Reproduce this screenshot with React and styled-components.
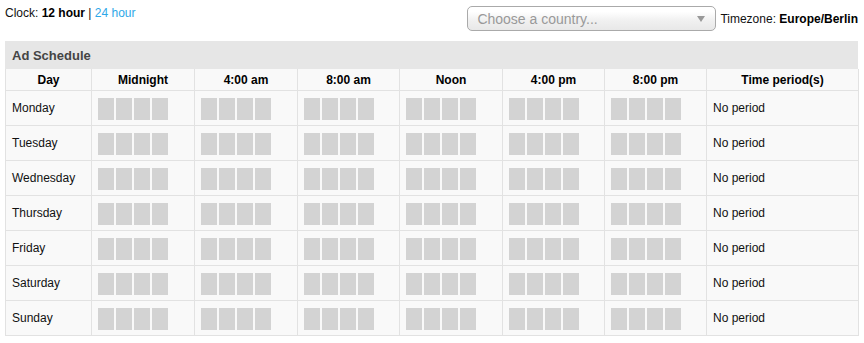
import React from "react";
import styled, { createGlobalStyle } from "styled-components";

const Global = createGlobalStyle`
  html, body { margin: 0; padding: 0; background: #fff; }
  body { font-family: "Liberation Sans", Arial, Helvetica, sans-serif; font-size: 12px; color: #111; }
`;

const Page = styled.div`
  padding: 0 6px 0 5px;
`;

const TopBar = styled.div`
  display: flex;
  justify-content: space-between;
  align-items: flex-start;
  height: 41px;
`;

const Clock = styled.div`
  padding-top: 6px;
  line-height: 14px;
  color: #111;
`;

const Bold = styled.b`
  font-weight: bold;
  color: #000;
`;

const Link = styled.a`
  color: #2ea7e8;
  text-decoration: none;
  cursor: pointer;
`;

const Right = styled.div`
  display: flex;
  align-items: center;
  padding-top: 6px;
  gap: 4px;
`;

const Select = styled.div`
  box-sizing: border-box;
  width: 249px;
  height: 25px;
  border: 1px solid #aaa;
  border-radius: 5px;
  background: linear-gradient(#ffffff 20%, #f0f0f0 60%, #e8e8e8);
  display: flex;
  align-items: center;
  justify-content: space-between;
  padding: 0 9px;
  font-size: 14px;
  color: #999;
`;

const Arrow = styled.span`
  width: 0;
  height: 0;
  border-left: 4px solid transparent;
  border-right: 4px solid transparent;
  border-top: 6px solid #999;
  margin-right: 1px;
  margin-top: 1px;
`;

const Timezone = styled.div`
  color: #111;
  line-height: 14px;
  padding-top: 1px;
`;

const Band = styled.div`
  background: #e6e6e6;
  box-sizing: border-box;
  height: 28px;
  line-height: 28px;
  padding: 1px 0 0 7px;
  font-size: 13px;
  font-weight: bold;
  color: #444;
`;

const Table = styled.table`
  width: 853px;
  border-collapse: collapse;
  table-layout: fixed;
  background: #f9f9f9;
`;

const Th = styled.th`
  border: 1px solid #e2e2e2;
  border-top: none;
  height: 21px;
  padding: 0;
  font-weight: bold;
  font-size: 12px;
  color: #000;
  text-align: center;
`;

const Td = styled.td`
  border: 1px solid #e2e2e2;
  height: 34px;
  padding: 0 6px;
  font-size: 12px;
  color: #111;
  vertical-align: middle;
`;

const Blocks = styled.div`
  display: flex;
  gap: 2px;
  padding-top: 1px;
`;

const Block = styled.span`
  width: 16px;
  height: 22px;
  background: #d3d3d3;
`;

const hours = ["Midnight", "4:00 am", "8:00 am", "Noon", "4:00 pm", "8:00 pm"];
const days = ["Monday", "Tuesday", "Wednesday", "Thursday", "Friday", "Saturday", "Sunday"];
const widths = [86, 103, 103, 102, 103, 102, 102, 152];

export default function App() {
  return (
    <Page>
      <Global />
      <TopBar>
        <Clock>
          Clock: <Bold>12 hour</Bold> | <Link>24 hour</Link>
        </Clock>
        <Right>
          <Select>
            <span>Choose a country...</span>
            <Arrow />
          </Select>
          <Timezone>
            Timezone: <Bold>Europe/Berlin</Bold>
          </Timezone>
        </Right>
      </TopBar>
      <Band>Ad Schedule</Band>
      <Table>
        <colgroup>
          {widths.map((w, i) => (
            <col key={i} style={{ width: w }} />
          ))}
        </colgroup>
        <thead>
          <tr>
            <Th>Day</Th>
            {hours.map((h) => (
              <Th key={h}>{h}</Th>
            ))}
            <Th>Time period(s)</Th>
          </tr>
        </thead>
        <tbody>
          {days.map((d) => (
            <tr key={d}>
              <Td>{d}</Td>
              {hours.map((h) => (
                <Td key={h}>
                  <Blocks>
                    {[0, 1, 2, 3].map((i) => (
                      <Block key={i} />
                    ))}
                  </Blocks>
                </Td>
              ))}
              <Td>No period</Td>
            </tr>
          ))}
        </tbody>
      </Table>
    </Page>
  );
}
